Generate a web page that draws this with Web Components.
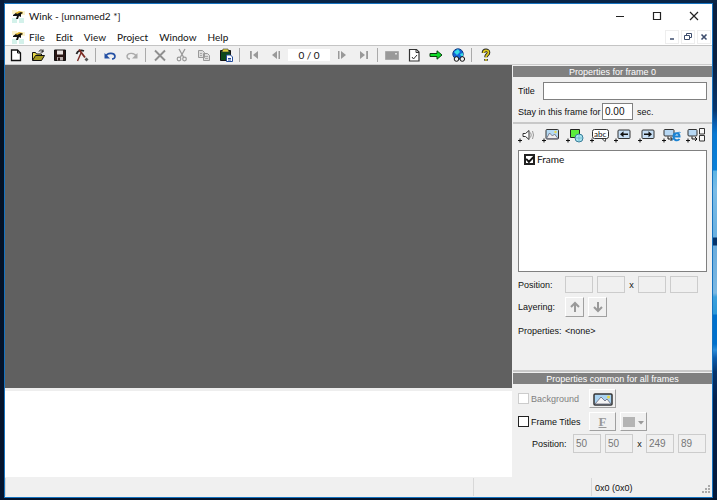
<!DOCTYPE html>
<html lang="en">
<head>
<meta charset="utf-8">
<title>Wink - [unnamed2 *]</title>
<style>
html{height:100%}
body{margin:0;height:100%;box-sizing:border-box;padding:3px 4px 2px;
 background:linear-gradient(#071c3c 0 60px,transparent 60px) left/4px 100% no-repeat,
 linear-gradient(#04101f,#04142e) left/4px 100% no-repeat,
 linear-gradient(#0a2547,#0a2547) top/100% 3px no-repeat,
 linear-gradient(#03132b,#03132b) bottom/100% 2px no-repeat,
 linear-gradient(#0a2040 0 60px,#08356c 110px,#0a5cae 123px,#0878d2 134px,#0a80d8 170px,#5cb4e4 171px,#7cbce6 190px,#6ab0e0 237px,#04346c 238px 245px,#6cacdc 246px,#7cb8e2 293px,#3ca0dc 297px,#2c98d8 314px,#0070cc 315px,#0070cc 344px,#2c8cd8 350px,#0c5cac 358px,#06346c 372px,#04204c 400px,#031838 500px) right/5px 100% no-repeat,#03132b}
</style>
</head>
<body>
<wink-window>
 <wink-titlebar slot="title">Wink - [unnamed2 *]</wink-titlebar>
 <wink-menubar slot="menu"></wink-menubar>
 <wink-toolbar slot="tools"></wink-toolbar>
 <wink-frame-panel slot="side"></wink-frame-panel>
 <wink-common-panel slot="side"></wink-common-panel>
 <wink-statusbar slot="status">0x0 (0x0)</wink-statusbar>
</wink-window>
<script>
const ICONS = {
 bird:'<path fill="#fbf3cf" d="M2 2h5v4H2zM10 3h5v4h-5z"/><path fill="#d3f1ea" d="M2 10h5v5H2zM9 10h5v5H9z"/><path fill="#e3b62c" d="M5 5l4-2 4 1-1 2-6 1z"/><path fill="#111" d="M3 7l3-2 1 1 4-2 2 1-2 1 0 3-2-1-1 3H6l1-3-4 0z"/>',
 new:'<path fill="#fff" stroke="#111" stroke-width="1.3" d="M3.500 3h6l3 3v7.500h-9z"/><path fill="none" stroke="#111" d="M9.500 3v3h3"/>',
 open:'<path fill="#e8d94a" stroke="#111" d="M2.500 13V5.500h3l1 1.500h5v2"/><path fill="#a59a20" stroke="#111" d="M2.500 13.500l3-5h9l-3 5z"/><path fill="none" stroke="#111" d="M9 4.500c1-2 3-2 4 0m0-2v2.500h-2.500"/>',
 save:'<path fill="#2a1614" stroke="#111" d="M2.500 3h11v10.500h-11z"/><path fill="#e9e2e0" d="M5 3.500h6v4H5z"/><path fill="#b8aeac" d="M5 10h6v3.500H5z"/><path fill="#2a1614" d="M6 10.500h2v3H6z"/>',
 pick:'<path fill="none" stroke="#222" stroke-width="1.800" d="M2.500 7c1-4 5-4 7.500-3"/><path fill="none" stroke="#7c2a22" stroke-width="1.800" d="M5 2.500l6 8"/><path fill="none" stroke="#7c2a22" stroke-width="1.400" d="M7 6l-3.500 8"/><path fill="#555" d="M12.500 10.500l2 2-2 2-2-2z"/>',
 undo:'<path fill="none" stroke="#2450a4" stroke-width="1.600" d="M4 9c1-3 8-4 9 0 0 2-1 3-3 3"/><path fill="#2450a4" d="M2.500 6v5.500H8z"/>',
 redo:'<path fill="none" stroke="#aaa" stroke-width="1.400" d="M12 9c-1-3-8-4-9 0 0 2 1 3 3 3"/><path fill="#aaa" d="M13.500 6v5.500H8z"/>',
 del:'<path fill="none" stroke="#8f8f8f" stroke-width="1.900" d="M3 3.500l10 10M13 3.500l-10 10"/>',
 cut:'<path fill="none" stroke="#999" stroke-width="1.300" d="M5 2l4.500 8M11 2L6.500 10"/><circle cx="5" cy="12" r="1.800" fill="none" stroke="#999" stroke-width="1.200"/><circle cx="10.500" cy="12" r="1.800" fill="none" stroke="#999" stroke-width="1.200"/>',
 copy:'<path fill="#ddd" stroke="#999" d="M2.500 3.500h4l2 2v5h-6zM7.500 6.500h4l2 2v5h-6z"/><path stroke="#aaa" d="M4 6.500h2M4 8.500h2M9 9.500h3M9 11.500h3"/>',
 paste:'<path fill="#0d4a1b" stroke="#111" d="M2.500 3.500h10v10h-10z"/><path fill="#dbd23c" stroke="#333" stroke-width=".6" d="M5 2h5l1 3H4z"/><path fill="#fff" stroke="#234c9c" d="M8.500 8h4l2 2v4.500h-6z"/><path stroke="#234c9c" d="M10 11.500h3M10 13h3"/>',
 first:'<path fill="#999" d="M4 4h1.800v8H4zM12 4v8L7 8z"/>',
 prev:'<path fill="#999" d="M9 4v8L4 8zM10.500 4H12v8h-1.500z"/>',
 next:'<path fill="#999" d="M4 4h1.500v8H4zM7 4l5 4-5 4z"/>',
 last:'<path fill="#999" d="M10.200 4H12v8h-1.800zM4 4l5 4-5 4z"/>',
 kbd:'<path fill="#999" stroke="#aaa" d="M1.500 4.500h13v8h-13z"/><path fill="#ddd" d="M11 6h2v1.500h-2z"/>',
 page:'<path fill="#fff" stroke="#333" stroke-width="1.200" d="M3.500 2.500h7l2.500 2.500v9H3.500z"/><path fill="none" stroke="#333" d="M10 2.500v3h3M6 10l1.500 2 3.500-4"/>',
 go:'<path fill="#0fdc28" stroke="#0a3c10" d="M2 6.500h7V3.800L14 8l-5 4.200V9.500H2z"/>',
 web:'<circle cx="8" cy="7" r="5.200" fill="#1464d8" stroke="#123c84"/><path fill="#34dce4" d="M4 5l4-3 2 3-3 3zM10 7l3-1v3h-2z"/><circle cx="6.500" cy="12" r="2.300" fill="#eee" stroke="#111"/><circle cx="12.300" cy="12" r="2.300" fill="#eee" stroke="#111"/>',
 help:'<path fill="none" stroke="#222" stroke-width="3.600" d="M5.500 6c0-3.500 5-3.500 5-.5C10.500 8 8 7.500 8 10.200M8 12v1.800"/><path fill="none" stroke="#dfca1e" stroke-width="1.800" d="M5.500 6c0-3.500 5-3.500 5-.5C10.500 8 8 7.500 8 10.200M8 12v1.800"/>',
 sound:'<path fill="#fff" stroke="#333" d="M4 6.500h2.500l3.500-3v9l-3.500-3H4z"/><path fill="none" stroke="#999" d="M11.500 5.500q1.500 2.500 0 5M13.500 4q2 4 0 8"/>',
 image:'<rect x="3" y="2.500" width="12.500" height="9.500" rx="1" fill="#b5daf4" stroke="#333"/><path fill="#eee" stroke="#667" stroke-width=".8" d="M3.500 11.500l3-5.500 3 3 2-2 3.500 4.500z"/><circle cx="12.500" cy="5" r="1.200" fill="#e8d84a"/>',
 shape:'<path fill="#5cec3c" stroke="#222" d="M3.500 2.500h9v8h-9z"/><circle cx="12" cy="11" r="4" fill="#a8e4f0" stroke="#3a7c98"/><path stroke="#5aa4bc" stroke-width=".6" d="M12 7v8M8 11h8"/>',
 call:'<rect x="1.500" y="2.500" width="16" height="9" rx="2" fill="#fff" stroke="#333"/><path fill="#fff" stroke="#333" d="M11 11.500h4l-1 3z"/>',
 left:'<rect x="3" y="3" width="12" height="8.500" rx="1" fill="#c6def4" stroke="#333"/><path fill="#111" d="M5 7.200l3.500-3v2.200H13v1.700H8.500v2.200z"/>',
 right:'<rect x="3" y="3" width="12" height="8.500" rx="1" fill="#c6def4" stroke="#333"/><path fill="#111" d="M13 7.200l-3.500-3v2.200H5v1.700h4.500v2.200z"/>',
 url:'<rect x="1" y="2.500" width="10" height="6.500" rx="1" fill="#b7d8f4" stroke="#333"/><path fill="none" stroke="#111" d="M5 9.500v2.500h4M7.500 10l2 2-2 2"/><path fill="none" stroke="#1b84d4" stroke-width="2" d="M10.500 9.500h6c0-4.500-6-4.500-6 0 0 4.500 4.500 4.500 6 2.500"/><path fill="none" stroke="#1b84d4" d="M9.500 13.500c2-6 5-9 8-8"/>',
 jump:'<rect x="1" y="2.500" width="9" height="6.500" rx="1" fill="#b7d8f4" stroke="#333"/><path stroke="#111" fill="none" d="M5 9.500v2.500h5M8 10l2 2-2 2"/><path fill="#f6f6f6" stroke="#333" d="M12.500 1.500h5v5.500h-5zM12.500 8.500h5v5.500h-5z"/>',
 plus:'<path stroke="#111" d="M-1 13.500h4M1 11.500v4"/>',
 photo:'<rect x="-1" y="3" width="18" height="11" rx="1" fill="#a9d3f2" stroke="#333" stroke-width="1.500"/><path fill="#f4f4f4" stroke="#667" stroke-width=".8" d="M0 13l6-7 4 4 2-2 4 5z"/><circle cx="13.500" cy="6" r="1.500" fill="#e8d84a"/>',
 up:'<path fill="none" stroke="#999" stroke-width="2" d="M8 13V4M4 8l4-4 4 4"/>',
 down:'<path fill="none" stroke="#999" stroke-width="2" d="M8 3v9M4 8l4 4 4-4"/>',
 swatch:'<path fill="#b4b4b4" d="M-3 3H9v10H-3z"/><path fill="#999" d="M12 7h6l-3 3.500z"/>',
 grip:'<path fill="#aaa" d="M12 6h2v2h-2zM9 9h2v2H9zM12 9h2v2h-2zM6 12h2v2H6zM9 12h2v2H9zM12 12h2v2h-2z"/>',
 min:'<path stroke="#222" d="M4 8.500h8"/>',
 max:'<path fill="none" stroke="#222" stroke-width="1.200" d="M4.500 4.500h7v7h-7z"/>',
 close:'<path stroke="#222" stroke-width="1.200" d="M4 4l8 8M12 4l-8 8"/>',
 cmin:'<path stroke="#3c4c6c" stroke-width="1.500" d="M6 10h4"/>',
 cmax:'<path fill="none" stroke="#3c4c6c" d="M6.500 6V4.500h5v4H10M4.500 6.500h5v4h-5z"/>',
 cclose:'<path stroke="#3c4c6c" stroke-width="1.600" d="M5.500 5.500l5 5M10.500 5.500l-5 5"/>'
};
const BASE = `<style>
:host{display:block;box-sizing:border-box}
*{box-sizing:border-box}
button,input{font:inherit;margin:0;padding:0;color:inherit}
button{background:none;border:0;display:flex;align-items:center;justify-content:center}
</style>`;
const define = (tag, html) => customElements.define(tag, class extends HTMLElement{
 constructor(){super();this.attachShadow({mode:'open'}).innerHTML = BASE + html}
});

customElements.define('wink-icon', class extends HTMLElement{
 constructor(){super();this.attachShadow({mode:'open'})}
 connectedCallback(){
  this.shadowRoot.innerHTML = `<style>:host{display:block;flex:none;width:16px;height:16px}svg{display:block;overflow:visible}</style>
  <svg width="16" height="16" viewBox="0 0 16 16" aria-hidden="true">${this.getAttribute('name').split(' ').map(n=>ICONS[n]).join('')}</svg>`;
 }
});

define('wink-window', `<style>
:host{height:100%;border:1px solid #1673c0;display:flex;flex-direction:column;background:#f0f0f0;color:#111;font:10px/12px Lato,"Open Sans",sans-serif}
.body{flex:1;display:grid;grid-template-columns:1fr 199px;gap:1px;min-height:0}
.work{display:flex;flex-direction:column}
.canvas{flex:1;background:#606060}
.thumbs{height:89px;border-top:3px solid #eee;background:#fff}
.side{display:flex;flex-direction:column;font:9px/12px "Liberation Sans",sans-serif}
</style>
<slot name="title"></slot><slot name="menu"></slot><slot name="tools"></slot>
<div class="body"><main class="work"><div class="canvas"></div><div class="thumbs"></div></main>
<aside class="side"><slot name="side"></slot></aside></div>
<slot name="status"></slot>`);

define('wink-titlebar', `<style>
:host{display:flex;height:24px;align-items:center;background:#fff;padding-left:5px}
span{flex:1;padding-left:3px}
button{width:37px;height:24px}
</style><wink-icon name="bird"></wink-icon><span><slot></slot></span>
<button aria-label="Minimize"><wink-icon name="min"></wink-icon></button><button aria-label="Maximize"><wink-icon name="max"></wink-icon></button><button aria-label="Close"><wink-icon name="close"></wink-icon></button>`);

define('wink-menubar', `<style>
:host{display:flex;height:17px;align-items:center;background:#fff;padding:0 1px 0 5px}
nav{display:flex;flex:1;gap:11px;padding-left:3px}
.mdi{display:flex;gap:2px}
.mdi button{width:14px;height:14px;border:1px solid #eee}
</style><wink-icon name="bird"></wink-icon>
<nav><button>File</button><button>Edit</button><button>View</button><button>Project</button><button>Window</button><button>Help</button></nav>
<div class="mdi"><button aria-label="Minimize document"><wink-icon name="cmin"></wink-icon></button><button aria-label="Restore document"><wink-icon name="cmax"></wink-icon></button><button aria-label="Close document"><wink-icon name="cclose"></wink-icon></button></div>`);

const tool = n => n==='|' ? '<i></i>' : n==='#' ? '<output>0 / 0</output>' : `<button aria-label="${n}"><wink-icon name="${n}"></wink-icon></button>`;
define('wink-toolbar', `<style>
:host{display:flex;height:20px;align-items:center;background:#f0f0f0;border-top:1px solid #c4c4c4;border-bottom:1px solid #ccc}
button{width:22px;height:18px}
i{width:1px;height:14px;margin:0 3px 0 2px;background:#aaa}
output{width:42px;margin:0 1px;background:#fff;text-align:center}
</style>${'new open save pick | undo redo | del cut copy paste | first prev # next last | kbd page go web | help'.split(' ').map(tool).join('')}`);

const PANEL = `<style>
h2{margin:1px 0 5px;height:11px;font:inherit;line-height:12px;text-align:center;background:#808080;color:#fff}
label,span{white-space:nowrap}
.row{display:flex;align-items:center;padding:0 5px}
input:not([type=checkbox]){height:19px;min-width:0;border:1px solid #808080;background:#fff;padding:0 2px;font-size:10px}
input:disabled:not([type=checkbox]){border-color:#ccc;background:#f0f0f0;color:#777}
input[type=checkbox]{appearance:none;width:11px;height:11px;border:1px solid #222;background:#fff;display:grid;place-items:center}
input[type=checkbox]:disabled{border-color:#ccc}
.nums{display:grid;grid-template-columns:28px 28px 5px 28px 28px;column-gap:4px;align-items:center;text-align:center}
.nums input{width:100%}
.raised button{height:19px;border:1px solid #fff;border-right-color:#a0a0a0;border-bottom-color:#a0a0a0}
</style>`;

define('wink-frame-panel', PANEL + `<style>
:host{flex:1}
.title{height:18px;margin-bottom:3px}
.title label{width:25px}
.title input{flex:1;height:18px}
.stay{height:17px}
.stay label{width:84px}
.stay input{width:31px;height:17px;margin-right:4px}
.add{display:grid;grid-template-columns:repeat(8,1fr);margin-top:2px;padding:1px 5px 0 2px;height:28px;border-top:2px solid #c8c8c8}
.add button{height:20px;position:relative}
.add span{position:absolute;font:8px/10px Lato,sans-serif;left:7px;top:4px}
.list{margin:0 5px 4px;min-height:122px;border:1px solid #808080;background:#fff;padding:2px 5px}
.list label{display:flex;align-items:center;gap:2px;font:10px/12px Lato,sans-serif}
.list input{border-width:2px}
.list input::after{content:"";width:6px;height:3px;border:solid #111;border-width:0 0 2px 2px;transform:translateY(-1px) rotate(-45deg)}
.prop{display:grid;grid-template-columns:47px 1fr;row-gap:4px;padding:0 5px;align-items:center}
.prop .nums input{height:17px}
.raised{display:flex;gap:4px}.raised button{width:19px;height:20px}
.none{line-height:20px}
</style>
<h2>Properties for frame 0</h2>
<div class="row title"><label for="t">Title</label><input id="t"></div>
<div class="row stay"><label for="s">Stay in this frame for</label><input id="s" value="0.00"><span>sec.</span></div>
<div class="add">
<button aria-label="Add sound"><wink-icon name="sound plus"></wink-icon></button><button aria-label="Add image"><wink-icon name="image plus"></wink-icon></button><button aria-label="Add shape"><wink-icon name="shape plus"></wink-icon></button><button aria-label="Add callout"><wink-icon name="call plus"></wink-icon><span>abc</span></button><button aria-label="Add left button"><wink-icon name="left plus"></wink-icon></button><button aria-label="Add right button"><wink-icon name="right plus"></wink-icon></button><button aria-label="Add link"><wink-icon name="url plus"></wink-icon></button><button aria-label="Add jump"><wink-icon name="jump plus"></wink-icon></button></div>
<div class="list"><label><input type="checkbox" checked>Frame</label></div>
<div class="prop"><span>Position:</span><div class="nums"><input disabled aria-label="Left"><input disabled aria-label="Top"><span>x</span><input disabled aria-label="Width"><input disabled aria-label="Height"></div>
<span>Layering:</span><div class="raised"><button aria-label="Bring forward"><wink-icon name="up"></wink-icon></button><button aria-label="Send back"><wink-icon name="down"></wink-icon></button></div>
<span>Properties:</span><span class="none">&lt;none&gt;</span></div>`);

define('wink-common-panel', PANEL + `<style>
:host{border-top:2px solid #c8c8c8;padding-bottom:24px}
.opt{display:grid;grid-template-columns:71px 1fr;row-gap:4px;padding:0 5px;align-items:center}
label{display:flex;align-items:center;gap:2px}
.off{color:#808080}
.raised{display:flex;gap:4px}.raised button{width:27px}
.raised .f{font:bold 13px/14px "Liberation Serif",serif;color:#999;text-decoration:underline}
.pos{margin-top:3px;padding-left:19px;display:grid;grid-template-columns:41px 1fr;align-items:center}
</style>
<h2>Properties common for all frames</h2>
<div class="opt"><label class="off"><input type="checkbox" disabled>Background</label><div class="raised"><button aria-label="Background image"><wink-icon name="photo"></wink-icon></button></div>
<label><input type="checkbox">Frame Titles</label><div class="raised"><button class="f" aria-label="Font">F</button><button aria-label="Colour"><wink-icon name="swatch"></wink-icon></button></div></div>
<div class="pos"><span>Position:</span><div class="nums"><input disabled value="50" aria-label="Left"><input disabled value="50" aria-label="Top"><span>x</span><input disabled value="249" aria-label="Width"><input disabled value="89" aria-label="Height"></div></div>`);

define('wink-statusbar', `<style>
:host{display:grid;grid-template-columns:1fr 118px 105px 16px;height:20px;background:#f0f0f0;align-items:center;font-family:"Liberation Sans",sans-serif;font-size:9px}
span{border-left:1px solid #d8d8d8;height:18px;line-height:20px;padding-left:3px}
span:first-child{border:0}
</style><span></span><span></span><span><slot></slot></span><wink-icon name="grip"></wink-icon>`);
</script>
</body>
</html>
